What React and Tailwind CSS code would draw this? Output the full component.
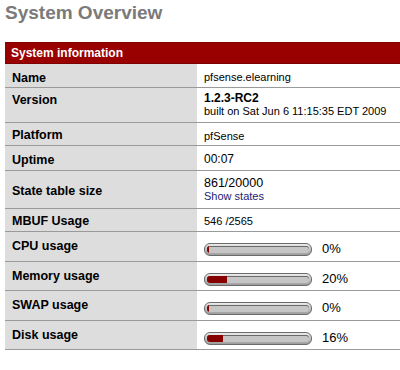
import React from "react";

const font = { fontFamily: '"Liberation Sans", Arial, sans-serif' };

function Bar({ pct }) {
  return (
    <div className="flex items-start">
      <div className="mt-[11px] h-[13px] w-[108px] rounded-[6px] border border-[#6b6b6b] bg-gradient-to-b from-[#ececec] to-[#9c9c9c] px-[2px] py-[2px]">
        <div className="h-full overflow-hidden rounded-[3px] bg-[#c6c6c6] shadow-[inset_0_1px_0_#6a6a6a]">
          <div className="h-full bg-[#870000]" style={{ width: `${Math.max(pct, 2)}%` }} />
        </div>
      </div>
      <span className="ml-[10px] mt-[9px] text-[13px] leading-[15px] text-black">{pct}%</span>
    </div>
  );
}

function Row({ label, h, labelTop = "pt-[6px]", valueTop = "pt-[6px]", center, children }) {
  return (
    <div className="flex border-b border-[#9a9a9a]" style={{ height: h }}>
      <div
        className={`flex w-[192px] shrink-0 bg-[#dddddd] pl-[7px] text-[12.5px] font-bold leading-[15px] text-black ${
          center ? "items-center pt-[3px]" : "items-start " + labelTop
        }`}
      >
        {label}
      </div>
      <div className={`flex-1 pl-[7px] text-[11px] leading-[15px] text-black ${valueTop}`}>{children}</div>
    </div>
  );
}

export default function App() {
  return (
    <div className="h-[370px] w-[400px] overflow-hidden bg-white" style={font}>
      <div className="ml-[5px] mt-[2px] h-[22px] text-[19px] font-bold leading-[22px] text-[#7a7a7a]">
        System Overview
      </div>
      <div className="ml-[5px] mt-[18px] w-[395px]">
        <div className="flex h-[22px] items-center border-y border-[#7e0000] bg-[#990000] pl-[6px] text-[12px] font-bold text-white">
          System information
        </div>
        <Row label="Name" h={24} labelTop="pt-[7px]" valueTop="pt-[6px]">
          pfsense.elearning
        </Row>
        <Row label="Version" h={35} labelTop="pt-[5px]" valueTop="pt-[4px]">
          <div className="text-[12px] font-bold leading-[13px]">1.2.3-RC2</div>
          <div className="leading-[12px]">built on Sat Jun 6 11:15:35 EDT 2009</div>
        </Row>
        <Row label="Platform" h={23} labelTop="pt-[5px]">
          pfSense
        </Row>
        <Row label="Uptime" h={25} labelTop="pt-[7px]" valueTop="pt-[6px]">
          <span className="text-[12px]">00:07</span>
        </Row>
        <Row label="State table size" h={38} center valueTop="pt-[5px]">
          <div className="text-[12.5px] leading-[14px]">861/20000</div>
          <a className="block leading-[12px] text-[#1c1c70]">Show states</a>
        </Row>
        <Row label="MBUF Usage" h={23} labelTop="pt-[5px]" valueTop="pt-[5px]">
          546 /2565
        </Row>
        <Row label="CPU usage" h={30} labelTop="pt-[7px]" valueTop="">
          <Bar pct={0} />
        </Row>
        <Row label="Memory usage" h={29} labelTop="pt-[7px]" valueTop="">
          <Bar pct={20} />
        </Row>
        <Row label="SWAP usage" h={30} labelTop="pt-[7px]" valueTop="">
          <Bar pct={0} />
        </Row>
        <Row label="Disk usage" h={29} labelTop="pt-[7px]" valueTop="">
          <Bar pct={16} />
        </Row>
      </div>
    </div>
  );
}
